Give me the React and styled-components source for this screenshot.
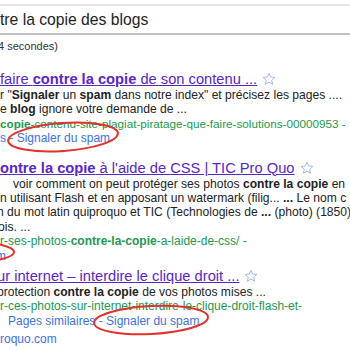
import React from 'react'
import styled, { createGlobalStyle } from 'styled-components'

const GlobalStyle = createGlobalStyle`
  html, body {
    margin: 0;
    padding: 0;
    background: #fff;
  }
  body {
    font-family: "Liberation Sans", Arial, sans-serif;
    color: #222;
  }
`;

const Page = styled.div`
  position: relative;
  width: 350px;
  height: 350px;
  overflow: hidden;
  white-space: nowrap;
`;

const SearchBox = styled.div`
  margin-top: 4px;
  height: 27px;
  border-top: 2px solid #e6e6e6;
  border-bottom: 2px solid #c1c1c1;
  font-size: 15.7px;
  line-height: 27px;
  color: #222;
`;

const Stats = styled.div`
  margin-top: 5px;
  margin-left: -2px;
  font-size: 11px;
  line-height: 13px;
  color: #333;
`;

const Results = styled.div`
  margin-top: 17px;
`;

const Result = styled.div`
  margin-bottom: ${props => props.gap ?? 13}px;
`;

const Title = styled.div`
  display: flex;
  align-items: center;
  font-size: 14.7px;
  line-height: 18px;
`;

const TitleLink = styled.span`
  color: #5a26c4;
  text-decoration: underline;
  margin-left: ${props => props.offset || 0}px;
  b { font-weight: bold; }
`;

const Star = styled.svg`
  width: 14px;
  height: 14px;
  margin-left: 5px;
  flex: none;
`;

const Line = styled.div`
  font-size: 12.1px;
  line-height: 14.4px;
  color: #222;
  margin-left: ${props => props.offset || 0}px;
  b { font-weight: bold; }
`;

const Cite = styled(Line)`
  color: #23984f;
  font-size: ${props => props.size || 12}px;
`;

const Links = styled(Line)`
  color: #4272db;
  font-size: 12px;
`;

const More = styled(Links)`
  margin-top: 4px;
`;

const Marks = styled.svg`
  position: absolute;
  left: 0;
  top: 0;
  width: 350px;
  height: 350px;
  pointer-events: none;
`;

const StarIcon = () => (
  <Star viewBox="0 0 24 24">
    <polygon
      points="12,2 14.9,8.6 22,9.3 16.6,14 18.2,21 12,17.3 5.8,21 7.4,14 2,9.3 9.1,8.6"
      fill="none"
      stroke="#9fb2ee"
      strokeWidth="1.6"
      strokeLinejoin="round"
    />
  </Star>
);

const App = () => {
  return (
    <Page>
      <GlobalStyle />
      <SearchBox>tre la copie des blogs</SearchBox>
      <Stats>4 secondes)</Stats>

      <Results>
        <Result>
          <Title>
            <TitleLink>faire <b>contre la copie</b> de son contenu ...</TitleLink>
            <StarIcon />
          </Title>
          <Line>r "<b>Signaler</b> un <b>spam</b> dans notre index" et précisez les pages ....</Line>
          <Line>e <b>blog</b> ignore votre demande de ...</Line>
          <Cite size={11.7}><b>copie</b>-contenu-site-plagiat-piratage-que-faire-solutions-00000953 -</Cite>
          <Links>s - Signaler du spam</Links>
        </Result>

        <Result gap={4}>
          <Title>
            <TitleLink><b>ontre la copie</b> à l'aide de CSS | TIC Pro Quo</TitleLink>
            <StarIcon />
          </Title>
          <Line offset={13}>voir comment on peut protéger ses photos <b>contre la copie</b> en</Line>
          <Line>n utilisant Flash et en apposant un watermark (filig... <b>...</b> Le nom c</Line>
          <Line offset={-3}>n du mot latin quiproquo et TIC (Technologies de <b>...</b> (photo) (1850)</Line>
          <Line offset={-2}>ois. ...</Line>
          <Cite>r-ses-photos-<b>contre-la-copie</b>-a-laide-de-css/ -</Cite>
          <Links offset={-4}>m</Links>
        </Result>

        <Result>
          <Title>
            <TitleLink offset={-3}>ur internet – interdire le clique droit ...</TitleLink>
            <StarIcon />
          </Title>
          <Line offset={-3}>protection <b>contre la copie</b> de vos photos mises ...</Line>
          <Cite>r-ces-photos-sur-internet-interdire-le-clique-droit-flash-et-</Cite>
          <Links offset={8}>Pages similaires - Signaler du spam</Links>
          <More>roquo.com</More>
        </Result>
      </Results>

      <Marks viewBox="0 0 350 350">
        <ellipse cx="63" cy="137" rx="55" ry="14" transform="rotate(-4 63 137)" fill="none" stroke="#e2312b" strokeWidth="2" />
        <ellipse cx="-28" cy="252" rx="42" ry="10" fill="none" stroke="#e2312b" strokeWidth="2" />
        <ellipse cx="151" cy="320" rx="57" ry="14" transform="rotate(-3 151 320)" fill="none" stroke="#e2312b" strokeWidth="2" />
      </Marks>
    </Page>
  )
}

export default App
